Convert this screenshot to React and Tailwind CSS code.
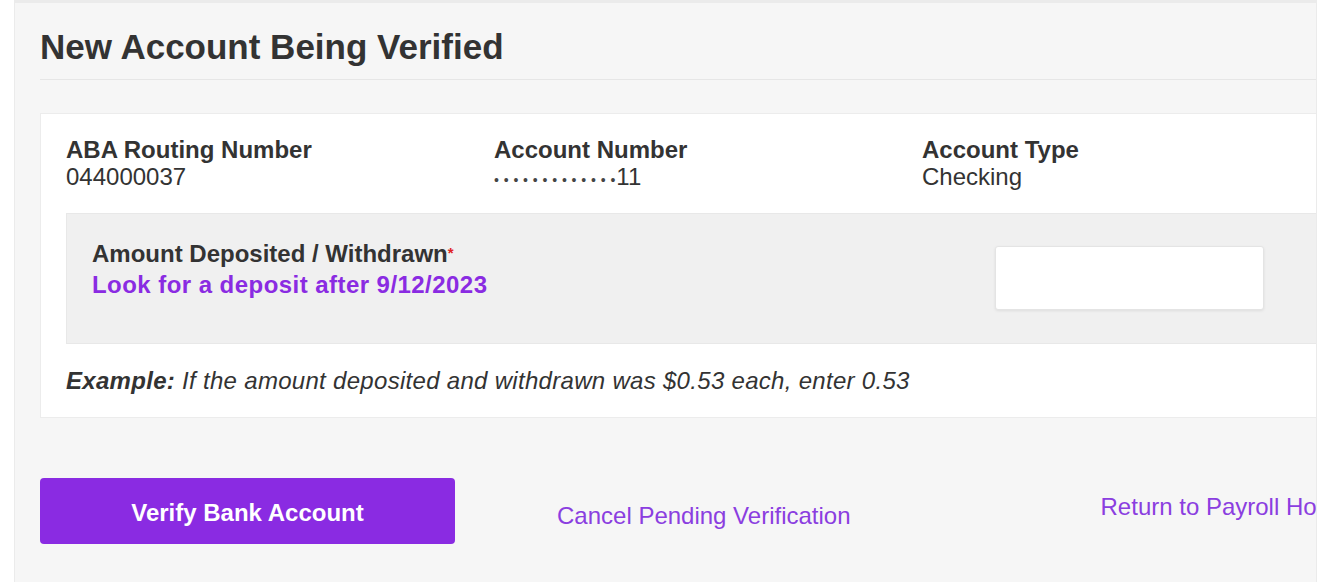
export default function App() {
  return (
    <div
      className="w-[1318px] h-[582px] bg-white overflow-hidden pl-[14px]"
      style={{ fontFamily: '"Liberation Sans", Arial, Helvetica, sans-serif' }}
    >
      <div className="w-[1303px] h-full bg-[#f6f6f6] border-l border-r border-t-[3px] border-[#ebebeb] overflow-hidden">
        <div className="w-[1440px] pl-[25px]">
          <h1 className="mt-[24px] pb-[12px] border-b border-[#e6e6e6] text-[35px] leading-[40px] font-bold text-[#333]">
            New Account Being Verified
          </h1>

          <div className="mt-[33px] bg-white border border-[#ececec] pl-[25px] pt-[22px] pb-[23px]">
            <div className="grid grid-cols-[428px_428px_428px] text-[24px] leading-[27px] text-[#333]">
              <div>
                <div className="font-bold">ABA Routing Number</div>
                <div>044000037</div>
              </div>
              <div>
                <div className="font-bold">Account Number</div>
                <div className="h-[27px] overflow-hidden whitespace-nowrap">
                  <span className="text-[14px] leading-[14px] tracking-[4.8px] text-[#444]">••••••••••••</span>
                  <span className="text-[14px] leading-[14px] text-[#444]">•</span>
                  <span className="ml-[1px]">11</span>
                </div>
              </div>
              <div>
                <div className="font-bold">Account Type</div>
                <div>Checking</div>
              </div>
            </div>

            <div className="mt-[23px] w-[1300px] h-[131px] bg-[#f0f0f0] border border-[#e8e8e8] flex items-start pl-[25px]">
              <div className="pt-[24px] w-[903px] text-[24px] leading-[31px]">
                <div className="font-bold text-[#333]">
                  Amount Deposited / Withdrawn
                  <span className="relative -top-[4px] text-[#e02424] text-[15px] leading-[15px]">*</span>
                </div>
                <div className="font-bold text-[#8a2be2] tracking-[0.45px]">Look for a deposit after 9/12/2023</div>
              </div>
              <div className="mt-[32px] w-[269px] h-[64px] bg-white border border-[#e4e4e4] rounded-[3px] shadow-[0_1px_3px_rgba(0,0,0,0.08)]" />
            </div>

            <div className="mt-[23px] text-[24px] leading-[27px] italic text-[#333] tracking-[0.3px]">
              <span className="font-bold">Example:</span> If the amount deposited and withdrawn was $0.53 each, enter 0.53
            </div>
          </div>

          <div className="mt-[60px] flex items-start">
            <button className="w-[415px] h-[66px] bg-[#8a2be2] rounded-[4px] text-white text-[24px] font-bold pt-[3px]">
              Verify Bank Account
            </button>
            <div className="ml-[102px] mt-[24px] text-[24px] leading-[27px] text-[#8b3ee0]">
              Cancel Pending Verification
            </div>
            <div className="ml-[250px] mt-[15px] text-[24px] leading-[27px] text-[#8b3ee0] whitespace-nowrap">
              Return to Payroll Home
            </div>
          </div>
        </div>
      </div>
    </div>
  );
}
